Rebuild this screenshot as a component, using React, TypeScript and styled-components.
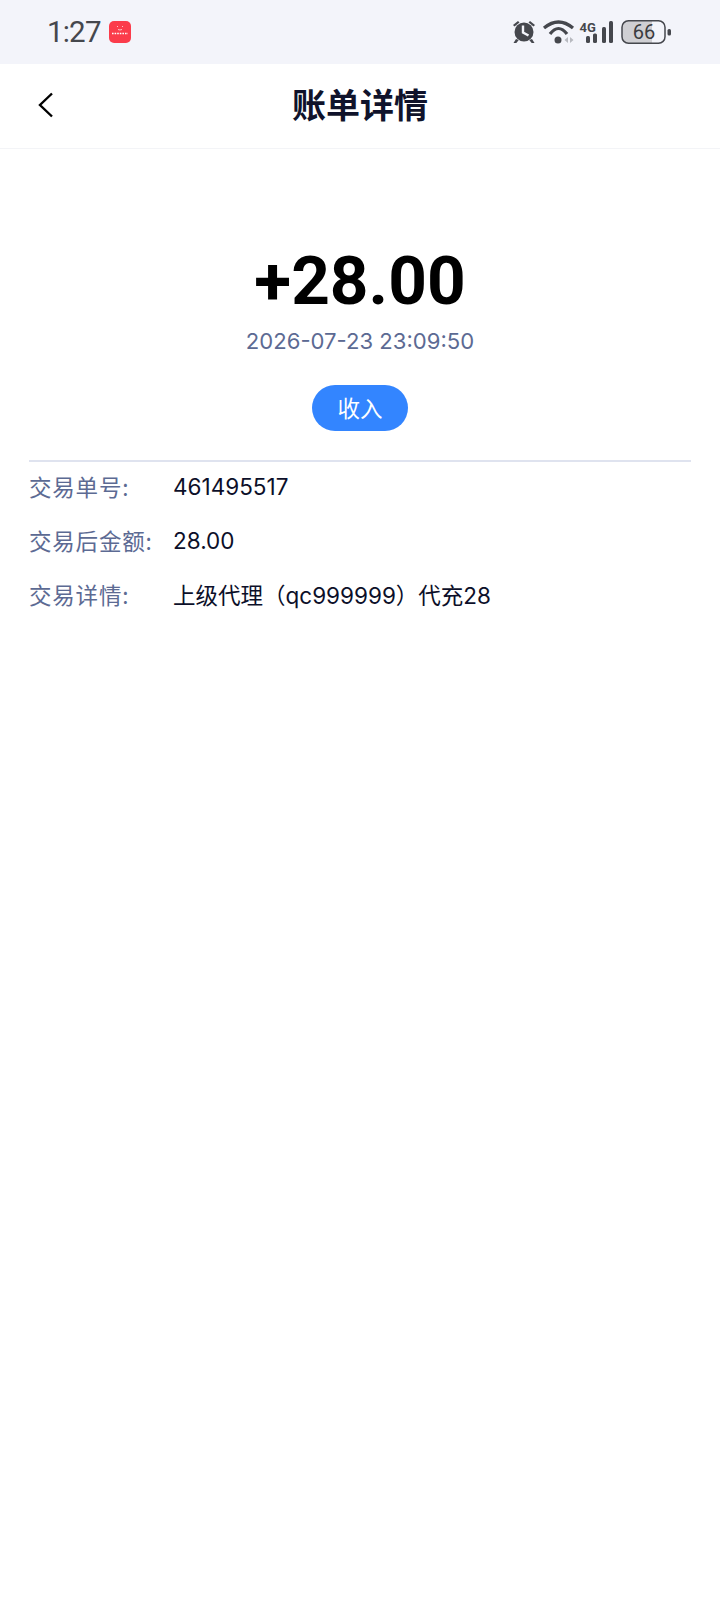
import React from "react";
import styled, { createGlobalStyle } from "styled-components";

const Global = createGlobalStyle`
  html, body { margin: 0; padding: 0; background: #fff; }
  body { font-family: "Inter", "Noto Sans CJK SC", sans-serif; }
`;
const Page = styled.div`
  width: 720px; height: 1600px; background: #fff; display: flex; flex-direction: column; overflow: hidden;
`;
const StatusBar = styled.div`
  height: 64px; flex: none; background: #f3f4fa; display: flex; align-items: center; justify-content: space-between;
  padding: 0 48px 0 47px; box-sizing: border-box;
`;
const StatusLeft = styled.div`display: flex; align-items: center; gap: 8px;`;
const Clock = styled.span`
  font-family: "Roboto", sans-serif; font-size: 29.5px; line-height: 64px; color: #45474d; letter-spacing: -0.8px;
`;
const StatusRight = styled.div`display: flex; align-items: center;`;
const NavBar = styled.header`
  height: 85px; flex: none; box-sizing: border-box; border-bottom: 1px solid #f3f4f7; position: relative;
  display: flex; align-items: center; justify-content: center;
`;
const BackButton = styled.span`
  position: absolute; left: 38px; top: 28px; width: 16px; height: 26px; display: block;
`;
const Title = styled.h1`
  margin: 0 0 4px; font-family: "Noto Sans CJK SC", sans-serif; font-size: 34px; font-weight: 700; color: #10132b; line-height: 76px;
`;
const Summary = styled.section`
  display: flex; flex-direction: column; align-items: center; padding-top: 91px;
`;
const Amount = styled.div`
  font-family: "Roboto", sans-serif; font-size: 67.5px; font-weight: 700; line-height: 82px; color: #000;
`;
const DateText = styled.div`
  font-family: "Inter", sans-serif; font-size: 22.1px; line-height: 32px; color: #5c6a93; margin-top: 3px;
`;
const Badge = styled.div`
  margin-top: 28px; width: 96px; height: 46px; border-radius: 23px; background: #3385ff; color: #fff;
  font-family: "Noto Sans CJK SC", sans-serif; font-size: 22.5px; line-height: 44px; text-align: center;
`;
const Details = styled.section`
  margin: 29px 29px 0; border-top: 2px solid #dfe3ef; display: flex; flex-direction: column; gap: 4px;
`;
const Row = styled.div`
  display: flex; height: 50px; box-sizing: border-box; padding-bottom: 2px; align-items: center; font-size: 22.5px;
  font-family: "Inter", "Noto Sans CJK SC", sans-serif;
`;
const Label = styled.span`
  width: 144px; flex: none; color: #5c6a93; letter-spacing: 0.8px;
  font-family: "Noto Sans CJK SC", sans-serif;
`;
const Value = styled.span`color: #0c0f29;`;

const AppDot = () => (
  <svg width="22" height="22" viewBox="0 0 22 22">
    <rect width="22" height="22" rx="5" fill="#fb3c4b" />
    <path d="M8 5l1 1M14 5l-1 1M9 8.5q2 1 4 0" stroke="#fff" strokeWidth="0.7" fill="none" />
    <path d="M3 12.5h16" stroke="#fff" strokeWidth="1.6" strokeDasharray="1.6 1" />
  </svg>
);
const StatusIcons = () => (
  <svg width="160" height="26" viewBox="0 0 160 26">
    <g fill="#45474d">
      <circle cx="12" cy="13" r="9.5" />
      <path d="M1 6l5-4 1.5 1.6-5 4zM23 6l-5-4-1.5 1.6 5 4z" />
      <path d="M4 20l-2.5 4h2.8l2.5-3zM20 20l2.5 4h-2.8l-2.5-3z" />
    </g>
    <path d="M11 6.5v7l5.5 3" stroke="#f3f4fa" strokeWidth="2.4" fill="none" />
    <g stroke="#45474d" strokeWidth="3.2" fill="none">
      <path d="M32 9Q46.5-3 61 9" />
      <path d="M38 15Q46.5 4 55 15" />
    </g>
    <circle cx="46" cy="21" r="3.5" fill="#45474d" />
    <path d="M52.5 21l3.5-3v6zM61.5 21l-3.5-3v6z" fill="#b8bac0" />
    <text x="67.5" y="13" fontFamily="Roboto, sans-serif" fontWeight="700" fontSize="13" fill="#45474d">4G</text>
    <g fill="#45474d">
      <rect x="74" y="17" width="4" height="7" rx="1.5" />
      <rect x="81" y="14.5" width="4" height="9.5" rx="1.5" />
      <rect x="90" y="8" width="4" height="16" rx="1.5" />
      <rect x="97" y="2" width="4" height="22" rx="1.5" />
    </g>
    <path d="M110 8a6 6 0 0 1 6-6h24v22h-24a6 6 0 0 1-6-6z" fill="#cfcfd3" />
    <rect x="110" y="1.7" width="43" height="22.6" rx="6.5" fill="none" stroke="#45474d" strokeWidth="1.5" />
    <text x="132" y="20" textAnchor="middle" fontFamily="Roboto, sans-serif" fontSize="20" fill="#3a3b40">66</text>
    <rect x="155.5" y="10" width="3.5" height="6.5" rx="1.5" fill="#45474d" />
  </svg>
);

export default function App() {
  return (
    <Page>
      <Global />
      <StatusBar>
        <StatusLeft>
          <Clock>1:27</Clock>
          <AppDot />
        </StatusLeft>
        <StatusRight><StatusIcons /></StatusRight>
      </StatusBar>
      <NavBar>
        <BackButton>
          <svg width="16" height="26" viewBox="0 0 16 26">
            <path d="M14 1.5L2 13l12 11.5" stroke="#000" strokeWidth="2.4" fill="none" />
          </svg>
        </BackButton>
        <Title>账单详情</Title>
      </NavBar>
      <Summary>
        <Amount>+28.00</Amount>
        <DateText>2026-07-23 23:09:50</DateText>
        <Badge>收入</Badge>
      </Summary>
      <Details>
        <Row><Label>交易单号:</Label><Value>461495517</Value></Row>
        <Row><Label>交易后金额:</Label><Value>28.00</Value></Row>
        <Row><Label>交易详情:</Label><Value>上级代理（qc999999）代充28</Value></Row>
      </Details>
    </Page>
  );
}
